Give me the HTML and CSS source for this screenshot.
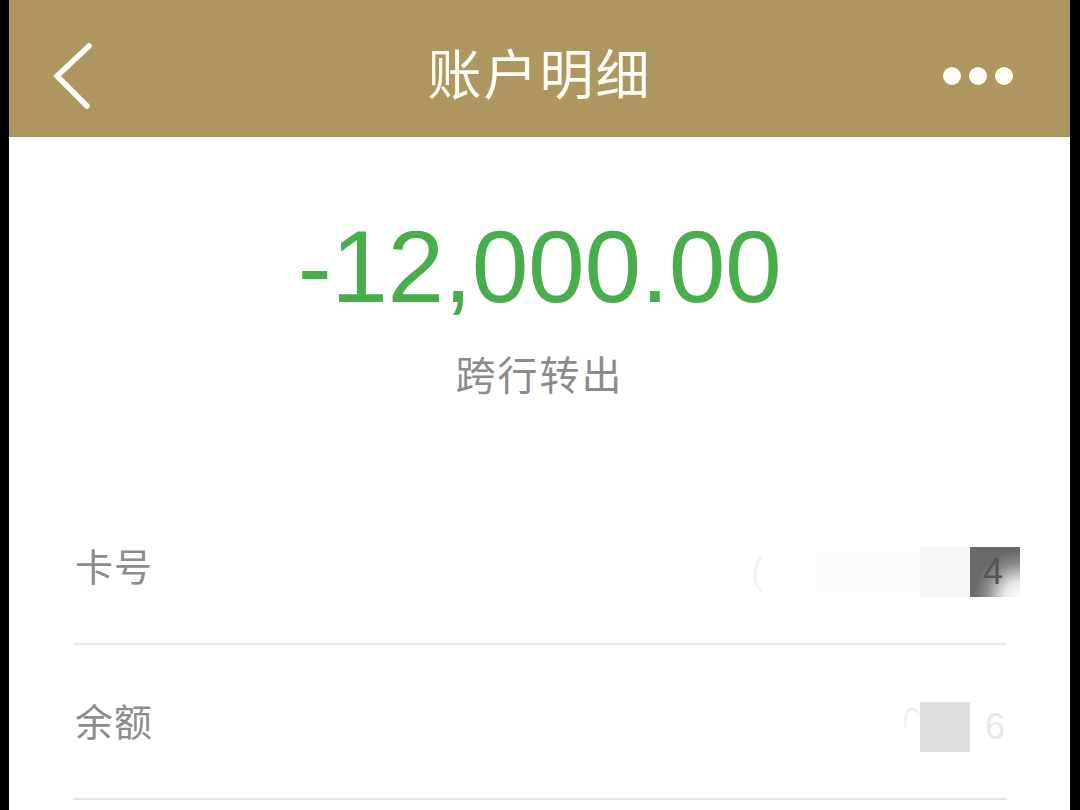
FILE: index.html
```html
<!DOCTYPE html>
<html lang="zh-CN">
<head>
<meta charset="utf-8">
<title>账户明细</title>
<link rel="stylesheet" href="styles.css">
</head>
<body>
<div class="screen">
  <header class="topbar">
    <div class="topbar-left">
      <svg class="back" width="42" height="70" viewBox="0 0 42 70" aria-hidden="true">
        <path d="M37 5 L5 35 L35 65" fill="none" stroke="#ffffff" stroke-width="5.5" stroke-linecap="round" stroke-linejoin="miter"/>
      </svg>
    </div>
    <h1 class="title">账户明细</h1>
    <div class="topbar-right">
      <span class="dot"></span><span class="dot"></span><span class="dot"></span>
    </div>
  </header>

  <section class="summary">
    <div class="amount">-12,000.00</div>
    <div class="kind">跨行转出</div>
  </section>

  <section class="details">
    <div class="row">
      <span class="label">卡号</span>
      <span class="value card">
        <span class="ghost-char">(</span>
        <span class="blur-strip"></span>
        <span class="blk blk-light"></span>
        <span class="blk blk-dark"><span class="digit">4</span></span>
      </span>
    </div>
    <div class="row">
      <span class="label">余额</span>
      <span class="value balance">
        <span class="ghost-arc"></span>
        <span class="blk blk-grey"></span>
        <span class="ghost-six">6</span>
      </span>
    </div>
  </section>
</div>
</body>
</html>
```

FILE: styles.css
```css
* { box-sizing: border-box; }

html, body {
  margin: 0;
  padding: 0;
  background: #000;
  height: 810px;
  overflow: hidden;
}

.screen {
  margin-left: 9px;
  width: 1061px;
  height: 810px;
  background: #ffffff;
  font-family: "Noto Sans CJK SC", "Noto Sans", sans-serif;
}

.topbar {
  height: 137px;
  background: #ad965f;
  border-bottom: 1px solid #a48c57;
  padding-top: 16px;
  display: grid;
  grid-template-columns: 1fr auto 1fr;
  align-items: center;
}

.topbar-left {
  padding-left: 43px;
  display: flex;
  align-items: center;
}

.back { display: block; }

.title {
  margin: -8px 0 0;
  font-size: 54px;
  font-weight: 400;
  color: #fffdf4;
  letter-spacing: 2px;
  line-height: 1;
}

.topbar-right {
  display: flex;
  justify-content: flex-end;
  align-items: center;
  gap: 8px;
  padding-right: 57px;
}

.dot {
  width: 18px;
  height: 18px;
  border-radius: 50%;
  background: #fffdf4;
}

.summary {
  display: flex;
  flex-direction: column;
  align-items: center;
  padding-top: 79px;
}

.amount {
  font-family: "Liberation Sans", Arial, sans-serif;
  font-size: 102px;
  line-height: 1;
  color: #48ae4c;
  letter-spacing: -0.4px;
}

.kind {
  margin-top: 35px;
  font-size: 40px;
  line-height: 1;
  color: #8b8b8b;
  letter-spacing: 2px;
}

.details {
  margin: 97px 63px 0 64px;
}

.row {
  height: 155px;
  border-bottom: 2px solid #e6e6e6;
  display: flex;
  align-items: center;
  justify-content: space-between;
  padding-left: 2px;
}

.label {
  font-size: 38px;
  color: #8c8c8c;
  letter-spacing: 1px;
  margin-top: -4px;
}

.value {
  display: flex;
  align-items: center;
  margin-right: -13px;
  margin-top: 10px;
  height: 50px;
}

.ghost-char {
  font-family: "Liberation Sans", Arial, sans-serif;
  font-size: 36px;
  color: #f2f2f2;
  margin-right: 52px;
}

.blur-strip {
  width: 105px;
  height: 40px;
  background: #fcfcfc;
}

.blk {
  width: 50px;
  height: 50px;
  display: block;
}

.blk-light { background: #f7f7f7; }

.blk-dark {
  background: radial-gradient(circle at 100% 100%, #ffffff 0%, #e6e6e6 22%, #8a8a8a 48%, #6a6a6a 65%);
  display: flex;
  align-items: center;
  justify-content: flex-start;
}

.digit {
  font-family: "Liberation Sans", Arial, sans-serif;
  font-size: 36px;
  color: #555555;
  margin-left: 13px;
}

.ghost-arc {
  width: 16px;
  height: 20px;
  border-top: 3px solid #ececec;
  border-left: 3px solid #f3f3f3;
  border-radius: 50% 50% 0 0;
  align-self: flex-start;
  margin-top: 6px;
}

.blk-grey { background: #dedede; }

.ghost-six {
  font-family: "Liberation Sans", Arial, sans-serif;
  font-size: 36px;
  color: #e8e8e8;
  width: 50px;
  text-align: center;
}
```
